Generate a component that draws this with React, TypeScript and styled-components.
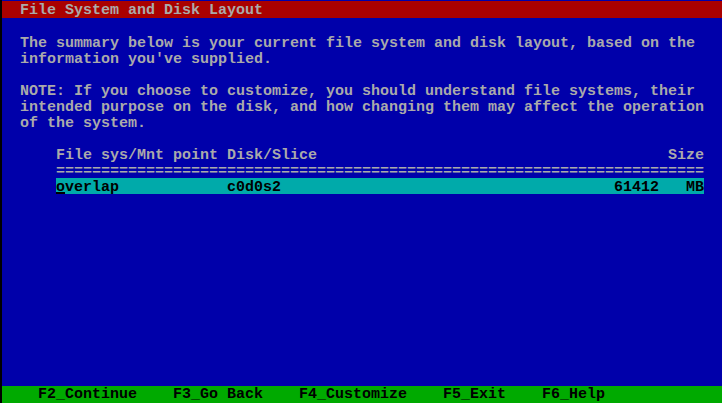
import React from "react";
import styled, { createGlobalStyle } from "styled-components";

const COL = 9;
const ROW = 16;

const GlobalStyle = createGlobalStyle`
  html, body {
    margin: 0;
    padding: 0;
    background: #000;
  }
`;

const summary = [
  "The summary below is your current file system and disk layout, based on the",
  "information you've supplied.",
];

const note = [
  "NOTE: If you choose to customize, you should understand file systems, their",
  "intended purpose on the disk, and how changing them may affect the operation",
  "of the system.",
];

const keys = ["F2_Continue", "F3_Go Back", "F4_Customize", "F5_Exit", "F6_Help"];

const App: React.FC = () => {
  return (
    <>
      <GlobalStyle />
      <Screen>
        <TitleBar>File System and Disk Layout</TitleBar>

        <Body>
          <Paragraph>
            {summary.map((l) => (
              <Line key={l}>{l}</Line>
            ))}
          </Paragraph>

          <Paragraph>
            {note.map((l) => (
              <Line key={l}>{l}</Line>
            ))}
          </Paragraph>

          <Table>
            <TableRow>
              <Cell>File sys/Mnt point</Cell>
              <Cell>Disk/Slice</Cell>
              <Cell $align="right">Size</Cell>
            </TableRow>
            <Line>{"=".repeat(72)}</Line>
            <TableRow $selected>
              <Cell>
                <Hotkey>o</Hotkey>verlap
              </Cell>
              <Cell>c0d0s2</Cell>
              <Cell>61412   MB</Cell>
            </TableRow>
          </Table>
        </Body>

        <StatusBar>
          {keys.map((k) => (
            <KeyLabel key={k}>{k}</KeyLabel>
          ))}
        </StatusBar>
      </Screen>
    </>
  );
};

export default App;

// Styled Components
const Screen = styled.div`
  width: ${80 * COL}px;
  height: 402px;
  margin-left: 2px;
  padding-top: 1px;
  display: flex;
  flex-direction: column;
  background-color: #0000aa;
  color: #aaaaaa;
  font-family: "Liberation Mono", "DejaVu Sans Mono", monospace;
  font-size: 15px;
  font-weight: bold;
  white-space: pre;
`;

const TitleBar = styled.div`
  height: 17px;
  line-height: 19px;
  padding-left: ${2 * COL}px;
  background-color: #aa0000;
`;

const Body = styled.div`
  flex: 1;
  padding-left: ${2 * COL}px;
`;

const Paragraph = styled.div`
  margin-top: ${ROW}px;
`;

/* one console row: line box taller than the cell drops glyphs onto the VGA baseline */
const Line = styled.div`
  height: ${ROW}px;
  line-height: 20px;
`;

const Table = styled.div`
  margin: ${ROW}px 0 0 ${4 * COL}px;
  width: ${72 * COL}px;
`;

const TableRow = styled.div<{ $selected?: boolean }>`
  display: grid;
  grid-template-columns: ${19 * COL}px ${43 * COL}px ${10 * COL}px;
  height: ${ROW}px;
  line-height: 20px;
  background-color: ${(p) => (p.$selected ? "#00aaaa" : "transparent")};
  color: ${(p) => (p.$selected ? "#000" : "#aaaaaa")};
`;

const Cell = styled.span<{ $align?: "left" | "right" }>`
  height: ${ROW}px;
  text-align: ${(p) => p.$align || "left"};
`;

const Hotkey = styled.span`
  text-decoration: underline;
  text-decoration-thickness: 2px;
  text-underline-offset: 1px;
`;

const StatusBar = styled.div`
  display: flex;
  gap: ${4 * COL}px;
  height: 17px;
  line-height: 18px;
  padding-left: ${4 * COL}px;
  background-color: #00aa00;
  color: #000;
`;

const KeyLabel = styled.span``;
